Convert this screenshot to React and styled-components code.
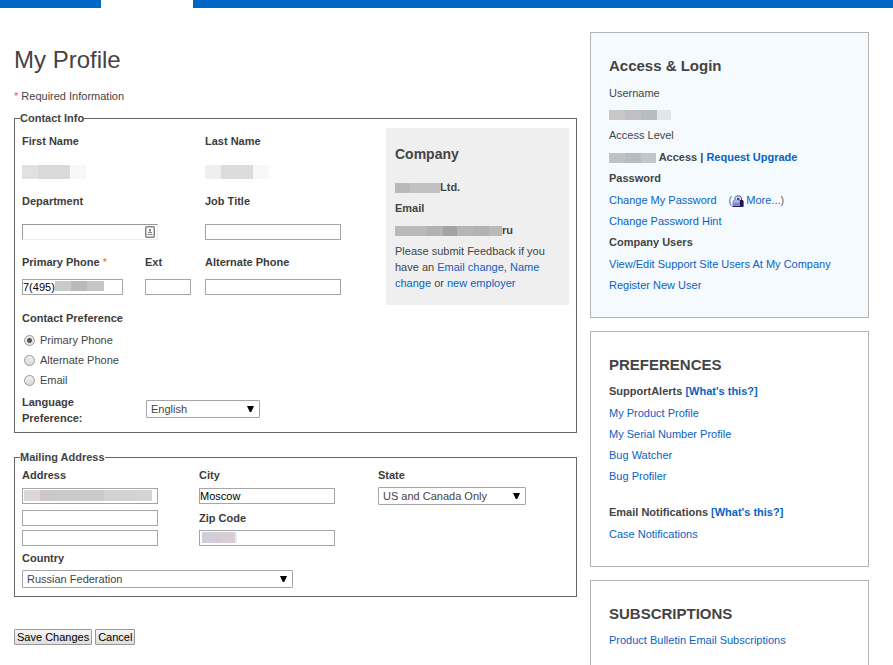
import React from "react";
import styled, { createGlobalStyle } from "styled-components";

const GlobalStyle = createGlobalStyle`
  *, *::before, *::after { box-sizing: border-box; }
  body {
    margin: 0;
    background: #fff;
    color: #444;
    font: 11px/16px "Liberation Sans", Arial, sans-serif;
  }
  h1, h2, p { margin: 0; }
  input, select, button { font: inherit; }
`;

const TopBar = styled.header`
  display: flex;
  height: 8px;
  background: #0067c5;
`;

const ActiveTab = styled.span`
  width: 92px;
  margin-left: 101px;
  background: #fff;
`;

const Page = styled.div`
  display: grid;
  grid-template-columns: minmax(0, 563fr) minmax(0, 279fr);
  gap: 13px;
  align-items: start;
  padding: 24px 24px 0 14px;
`;

const Main = styled.main`
  padding: 14px 0 20px;
`;

const Title = styled.h1`
  margin-bottom: 14px;
  font-size: 24px;
  font-weight: normal;
  line-height: 28px;
`;

const Required = styled.span`
  color: ${(p) => p.$color || "#f0506e"};
  font-weight: normal;
`;

const RequiredNote = styled.p`
  margin-bottom: 6px;
`;

const Group = styled.fieldset`
  min-width: 0;
  margin: 0 0 16px;
  padding: 0 7px 0 5px;
  border: 1px solid #666;
`;

const GroupTitle = styled.legend`
  padding: 0;
  font-weight: bold;
`;

const ContactLayout = styled.div`
  display: grid;
  grid-template-columns: minmax(0, 364fr) minmax(0, 183fr);
  align-items: start;
  padding: 2px 0 6px 2px;
`;

const ContactFields = styled.div`
  display: grid;
  grid-template-columns: 183fr 181fr;
  row-gap: 14px;
  padding-top: 5px;
`;

const Field = styled.div`
  display: flex;
  flex-direction: column;
  align-items: flex-start;
  gap: ${(p) => p.$gap || 16}px;
`;

const FieldPair = styled.div`
  display: flex;
  gap: 22px;
`;

const Label = styled.label`
  color: #3c3c3c;
  font-weight: bold;
`;

const LabelText = styled.span`
  color: #3c3c3c;
  font-weight: bold;
`;

const InputFrame = styled.span`
  position: relative;
  display: block;
  width: ${(p) => p.$width || 136}px;
  max-width: 100%;
`;

const TextInput = styled.input`
  display: block;
  width: 100%;
  height: 16px;
  padding: 0;
  border: 1px solid;
  border-color: ${(p) => (p.$inset ? "#999 #eee #eee #999" : "#a5a5a5")};
  border-radius: 0;
  background: #fff;
  color: #000;
  line-height: 14px;
`;

const ContactCardIcon = styled.svg`
  position: absolute;
  top: 2px;
  right: 3px;
`;

const MosaicStrip = styled.span`
  display: inline-flex;
  vertical-align: middle;
  height: ${(p) => p.$height || 10}px;
`;

const MosaicBlock = styled.span`
  width: ${(p) => p.$width}px;
  background: ${(p) => p.$color};
`;

const InputCover = styled.span`
  position: absolute;
  top: 2px;
  left: ${(p) => p.$left}px;
  display: flex;
`;

const Preferences = styled.div`
  grid-column: 1 / -1;
  padding-top: 1px;
`;

const RadioSet = styled.div`
  display: flex;
  flex-direction: column;
  padding: 4px 0;
`;

const RadioRow = styled.label`
  display: flex;
  align-items: center;
  gap: 5px;
  height: 20px;
  padding-left: 2px;
`;

const Radio = styled.input`
  appearance: none;
  width: 11px;
  height: 11px;
  margin: 0;
  border: 1px solid #999;
  border-radius: 50%;
  background: linear-gradient(#efefef, #d9d9d9);
  &:checked {
    background: radial-gradient(circle, #555 0 2px, #e6e6e6 3px);
  }
`;

const LanguageRow = styled.div`
  display: grid;
  grid-template-columns: 124px auto;
  align-items: start;
`;

const LanguageLabel = styled(Label)`
  width: 80px;
`;

const SelectFrame = styled.span`
  position: relative;
  display: block;
  width: ${(p) => p.$width}px;
  max-width: 100%;
`;

const Select = styled.select`
  appearance: none;
  display: block;
  width: 100%;
  height: 18px;
  padding: 0 20px 0 4px;
  border: 1px solid #a5a5a5;
  border-radius: 1px;
  background: #fff;
  color: #444;
`;

const SelectArrow = styled.svg`
  position: absolute;
  top: 6px;
  right: 6px;
  pointer-events: none;
`;

const SelectSpot = styled.div`
  padding-top: 6px;
`;

const CompanyBox = styled.section`
  padding: 17px 9px 14px;
  background: #efefef;
`;

const CompanyTitle = styled.h2`
  margin-bottom: 16px;
  font-size: 14px;
  line-height: 18px;
`;

const CompanyLine = styled.p`
  margin-bottom: ${(p) => p.$gap || 5}px;
  font-weight: bold;
`;

const Link = styled.a`
  color: #0a62c4;
  text-decoration: none;
  &:hover { text-decoration: underline; }
`;

const AddressLayout = styled.div`
  display: grid;
  grid-template-columns: 177fr 179fr 191fr;
  padding: 2px 0 4px 2px;
`;

const AddressLines = styled.div`
  display: flex;
  flex-direction: column;
  gap: 4px;
`;

const AddressColumn = styled.div`
  display: flex;
  flex-direction: column;
  gap: 6px;
`;

const CountryField = styled(Field)`
  padding: 0 0 8px 2px;
`;

const Actions = styled.div`
  display: flex;
  gap: 3px;
  padding-top: 16px;
`;

const Button = styled.button`
  height: 16px;
  padding: 0 2px;
  border: 1px solid #999;
  border-radius: 1px;
  background: linear-gradient(#f6f6f6, #dedede);
  color: #000;
  line-height: 14px;
`;

const Sidebar = styled.aside`
  display: flex;
  flex-direction: column;
  gap: 13px;
`;

const Panel = styled.section`
  padding: 23px 18px 21px;
  border: 1px solid #b3b3b3;
  background: ${(p) => (p.$tinted ? "#f5faff" : "#fff")};
`;

const PanelTitle = styled.h2`
  margin-bottom: ${(p) => p.$gap || 6}px;
  font-size: 15px;
  line-height: 20px;
`;

const PanelRow = styled.p`
  line-height: 21px;
`;

const PanelHeading = styled(PanelRow)`
  margin: ${(p) => (p.$spaced ? 15 : 0)}px 0 1px;
  font-weight: bold;
`;

const StrongRow = styled(PanelRow)`
  margin-top: 1px;
  font-weight: bold;
`;

const MosaicRow = styled.div`
  display: flex;
  align-items: center;
  height: 21px;
`;

const MoreLink = styled.span`
  margin-left: 12px;
  color: #666;
`;

const LockSvg = styled.svg`
  margin-right: 2px;
  vertical-align: -3px;
`;

const blocks = {
  firstName: [["#e1e1e1", 16], ["#dadada", 32], ["#f8f8f8", 16]],
  lastName: [["#efefef", 16], ["#dcdcdc", 32], ["#f7f9f8", 16]],
  phone: [["#c8ccc7", 16], ["#bcb9b9", 16], ["#c2c7c2", 17]],
  address: [["#dcd7dd", 16], ["#cec6cd", 16], ["#cacccb", 48], ["#d2d3d5", 32], ["#d3d4d9", 16]],
  zip: [["#d2cbd8", 16], ["#d8cdd2", 17], ["#e4eef6", 2]],
  company: [["#b9b9b9", 15], ["#c1c1c1", 16], ["#bfc1c2", 14]],
  email: [["#b9b9b9", 32], ["#b2b2b2", 16], ["#a3a3a1", 14], ["#b4b7b8", 16], ["#b2b2b2", 16], ["#b8bab9", 13]],
  username: [["#c8c8c7", 16], ["#bec0c5", 16], ["#b8bcc0", 16], ["#e2e6ea", 14]],
  level: [["#bfc1c2", 16], ["#b9bcbe", 16], ["#c2c6c8", 15]],
};

function Mosaic({ name, height }) {
  return (
    <MosaicStrip $height={height} aria-hidden="true">
      {blocks[name].map(([color, width], i) => (
        <MosaicBlock key={i} $color={color} $width={width} />
      ))}
    </MosaicStrip>
  );
}

function TextField({ id, label, width, gap, required, children, ...rest }) {
  return (
    <Field $gap={gap}>
      <Label htmlFor={id}>
        {label}
        {required && <Required $color="#f60"> *</Required>}
      </Label>
      <InputFrame $width={width}>
        <TextInput id={id} type="text" {...rest} />
        {children}
      </InputFrame>
    </Field>
  );
}

function Dropdown({ id, width, value }) {
  return (
    <SelectFrame $width={width}>
      <Select id={id} defaultValue={value}>
        <option>{value}</option>
      </Select>
      <SelectArrow width="7" height="6" viewBox="0 0 7 6" aria-hidden="true">
        <path d="M0 0h7L4.200 6H2.800z" fill="#000" />
      </SelectArrow>
    </SelectFrame>
  );
}

function LockIcon() {
  return (
    <LockSvg width="12" height="12" viewBox="0 0 12 12" aria-hidden="true">
      <path d="M3 5.500V2.500L4.500 1H8l1.500 1.500v3z" fill="#d5d9f2" stroke="#50548c" />
      <path d="M5 3h2.500v2H5z" fill="#44477e" />
      <path d="M1.500 5h9l1 1v5H0.500V6.500z" fill="#7f88d2" />
      <path d="M2 5.500h5v2H1.500z" fill="#b9c0ef" />
      <path d="M8 5h2.500l1 1v5H8z" fill="#1a174e" />
      <path d="M0.500 11h11v1h-11z" fill="#27265f" />
    </LockSvg>
  );
}

export default function App() {
  return (
    <>
      <GlobalStyle />
      <TopBar><ActiveTab /></TopBar>
      <Page>
        <Main>
          <Title>My Profile</Title>
          <RequiredNote><Required>*</Required> Required Information</RequiredNote>
          <form onSubmit={(e) => e.preventDefault()}>
            <Group>
              <GroupTitle>Contact Info</GroupTitle>
              <ContactLayout>
                <ContactFields>
                  <Field><LabelText>First Name</LabelText><Mosaic name="firstName" height={14} /></Field>
                  <Field><LabelText>Last Name</LabelText><Mosaic name="lastName" height={14} /></Field>
                  <TextField id="department" label="Department" gap={15} $inset>
                    <ContactCardIcon width="10" height="12" viewBox="0 0 10 12" aria-hidden="true">
                      <rect x="0.750" y="0.750" width="8.500" height="10.500" rx="1" fill="#fff" stroke="#858585" strokeWidth="1.500" />
                      <path d="M4 3h2v2.500H4zM3 6h4v1H3zM2.500 8h5v1h-5z" fill="#858585" />
                    </ContactCardIcon>
                  </TextField>
                  <TextField id="job" label="Job Title" gap={15} />
                  <FieldPair>
                    <TextField id="phone" label="Primary Phone" required width={101} gap={9} defaultValue="7(495)">
                      <InputCover $left={33}><Mosaic name="phone" /></InputCover>
                    </TextField>
                    <TextField id="ext" label="Ext" width={46} gap={9} />
                  </FieldPair>
                  <TextField id="altphone" label="Alternate Phone" gap={9} />
                  <Preferences>
                    <LabelText id="pref">Contact Preference</LabelText>
                    <RadioSet role="radiogroup" aria-labelledby="pref">
                      <RadioRow><Radio type="radio" name="pref" defaultChecked />Primary Phone</RadioRow>
                      <RadioRow><Radio type="radio" name="pref" />Alternate Phone</RadioRow>
                      <RadioRow><Radio type="radio" name="pref" />Email</RadioRow>
                    </RadioSet>
                    <LanguageRow>
                      <LanguageLabel htmlFor="language">Language Preference:</LanguageLabel>
                      <SelectSpot><Dropdown id="language" width={114} value="English" /></SelectSpot>
                    </LanguageRow>
                  </Preferences>
                </ContactFields>
                <CompanyBox>
                  <CompanyTitle>Company</CompanyTitle>
                  <CompanyLine><Mosaic name="company" />Ltd.</CompanyLine>
                  <CompanyLine $gap={6}>Email</CompanyLine>
                  <CompanyLine><Mosaic name="email" />ru</CompanyLine>
                  <p>
                    Please submit Feedback if you have an <Link href="#email">Email change</Link>,{" "}
                    <Link href="#name">Name change</Link> or <Link href="#employer">new employer</Link>
                  </p>
                </CompanyBox>
              </ContactLayout>
            </Group>

            <Group>
              <GroupTitle>Mailing Address</GroupTitle>
              <AddressLayout>
                <Field $gap={6}>
                  <TextField id="address1" label="Address" gap={5}>
                    <InputCover $left={2}><Mosaic name="address" height={11} /></InputCover>
                  </TextField>
                  <AddressLines>
                    <InputFrame><TextInput aria-label="Address line 2" /></InputFrame>
                    <InputFrame><TextInput aria-label="Address line 3" /></InputFrame>
                  </AddressLines>
                </Field>
                <AddressColumn>
                  <TextField id="city" label="City" gap={5} defaultValue="Moscow" />
                  <TextField id="zip" label="Zip Code" gap={4}>
                    <InputCover $left={3}><Mosaic name="zip" height={11} /></InputCover>
                  </TextField>
                </AddressColumn>
                <Field $gap={4}>
                  <Label htmlFor="state">State</Label>
                  <Dropdown id="state" width={148} value="US and Canada Only" />
                </Field>
              </AddressLayout>
              <CountryField $gap={4}>
                <Label htmlFor="country">Country</Label>
                <Dropdown id="country" width={271} value="Russian Federation" />
              </CountryField>
            </Group>
            <Actions>
              <Button type="submit">Save Changes</Button>
              <Button type="button">Cancel</Button>
            </Actions>
          </form>
        </Main>

        <Sidebar>
          <Panel $tinted>
            <PanelTitle $gap={7}>Access &amp; Login</PanelTitle>
            <PanelRow>Username</PanelRow>
            <MosaicRow><Mosaic name="username" /></MosaicRow>
            <PanelRow>Access Level</PanelRow>
            <StrongRow><Mosaic name="level" /> Access | <Link href="#upgrade">Request Upgrade</Link></StrongRow>
            <PanelHeading>Password</PanelHeading>
            <PanelRow>
              <Link href="#password">Change My Password</Link>
              <MoreLink>(<LockIcon /><Link href="#more">More...</Link>)</MoreLink>
            </PanelRow>
            <PanelRow><Link href="#hint">Change Password Hint</Link></PanelRow>
            <PanelHeading>Company Users</PanelHeading>
            <PanelRow><Link href="#users">View/Edit Support Site Users At My Company</Link></PanelRow>
            <PanelRow><Link href="#register">Register New User</Link></PanelRow>
          </Panel>
          <Panel>
            <PanelTitle>PREFERENCES</PanelTitle>
            <PanelHeading>SupportAlerts <Link href="#alerts">[What's this?]</Link></PanelHeading>
            <PanelRow><Link href="#product">My Product Profile</Link></PanelRow>
            <PanelRow><Link href="#serial">My Serial Number Profile</Link></PanelRow>
            <PanelRow><Link href="#watcher">Bug Watcher</Link></PanelRow>
            <PanelRow><Link href="#profiler">Bug Profiler</Link></PanelRow>
            <PanelHeading $spaced>Email Notifications <Link href="#notifications">[What's this?]</Link></PanelHeading>
            <PanelRow><Link href="#case">Case Notifications</Link></PanelRow>
          </Panel>
          <Panel>
            <PanelTitle>SUBSCRIPTIONS</PanelTitle>
            <PanelRow><Link href="#bulletin">Product Bulletin Email Subscriptions</Link></PanelRow>
          </Panel>
        </Sidebar>
      </Page>
    </>
  );
}
